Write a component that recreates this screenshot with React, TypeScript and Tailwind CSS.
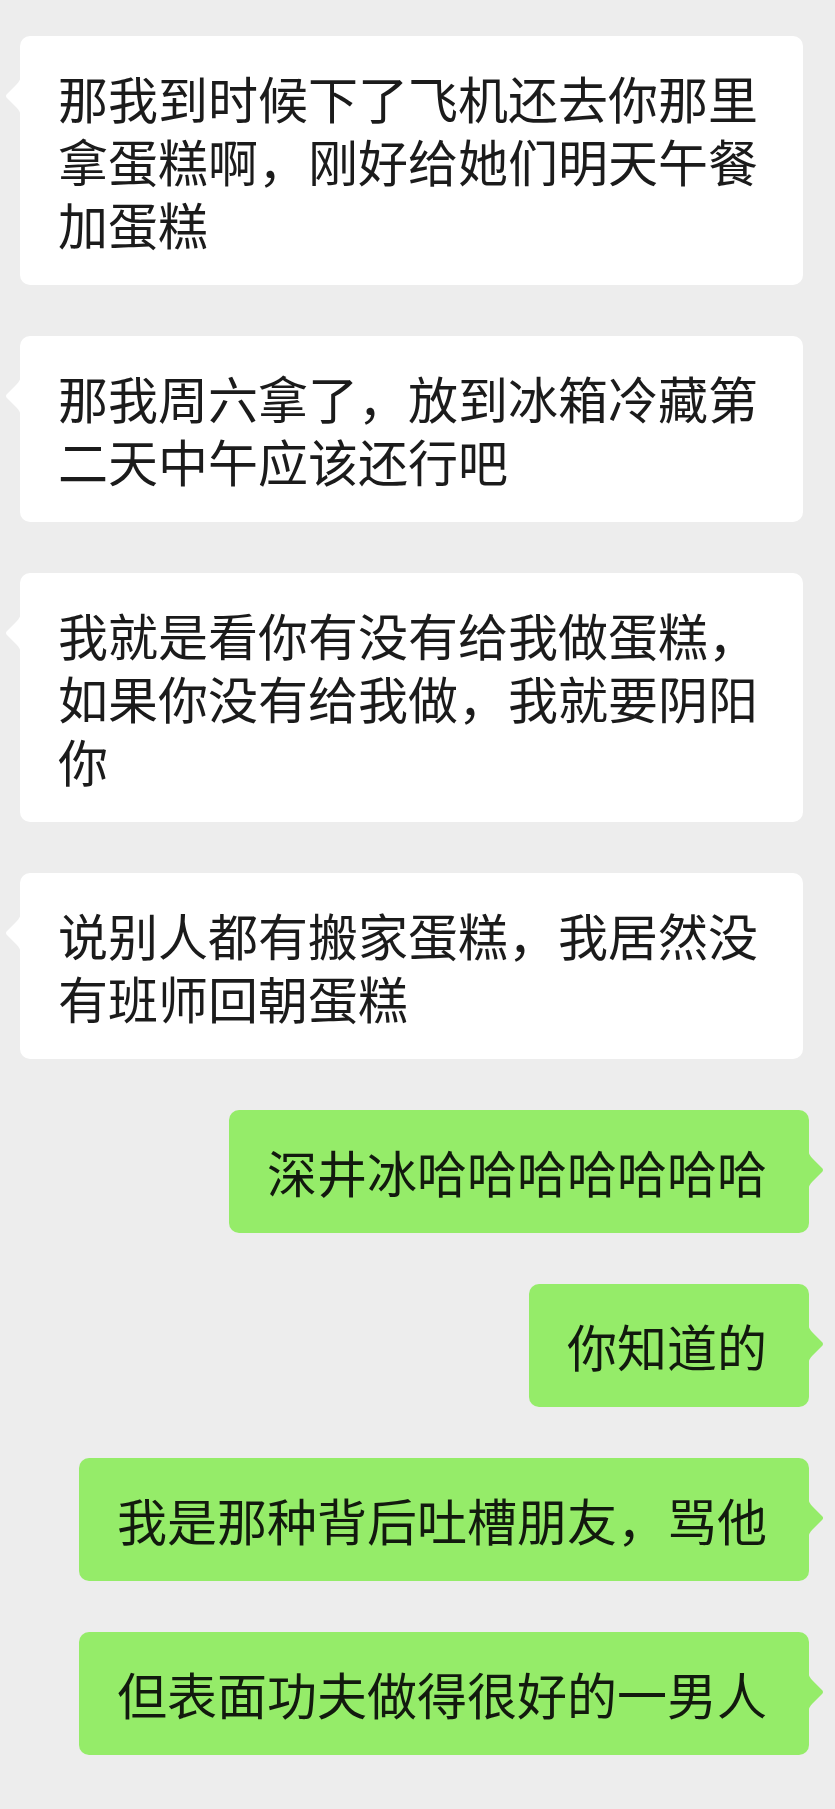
import { type ReactNode } from "react";

type Message = {
	from: "them" | "me";
	text: string;
};

const messages: Message[] = [
	{ from: "them", text: "那我到时候下了飞机还去你那里拿蛋糕啊，刚好给她们明天午餐加蛋糕" },
	{ from: "them", text: "那我周六拿了，放到冰箱冷藏第二天中午应该还行吧" },
	{ from: "them", text: "我就是看你有没有给我做蛋糕，如果你没有给我做，我就要阴阳你" },
	{ from: "them", text: "说别人都有搬家蛋糕，我居然没有班师回朝蛋糕" },
	{ from: "me", text: "深井冰哈哈哈哈哈哈哈" },
	{ from: "me", text: "你知道的" },
	{ from: "me", text: "我是那种背后吐槽朋友，骂他" },
	{ from: "me", text: "但表面功夫做得很好的一男人" },
];

export default function App() {
	return (
		<main
			className="min-h-[1809px] w-[835px] bg-[#ededed] pt-[36px] pb-[54px]"
			style={{ fontFamily: '"Noto Sans CJK SC", "Noto Sans", sans-serif' }}
		>
			<div className="flex flex-col gap-[51px]">
				{messages.map((message, index) =>
					message.from === "them" ? (
						<TheirBubble key={index}>{message.text}</TheirBubble>
					) : (
						<MyBubble key={index}>{message.text}</MyBubble>
					),
				)}
			</div>
		</main>
	);
}

function TheirBubble({ children }: { children: ReactNode }) {
	return (
		<div className="pl-[20px]">
			<div className="relative w-[783px] rounded-[10px] bg-white py-[30px] pl-[38px] pr-[40px] text-[50px] leading-[63px] text-[#1b1b1b]">
				<Tail className="absolute left-[-15px] top-[38px] -scale-x-100" fill="#ffffff" />
				{children}
			</div>
		</div>
	);
}

function MyBubble({ children }: { children: ReactNode }) {
	return (
		<div className="flex justify-end pr-[26px]">
			<div className="relative rounded-[10px] bg-[#95ec69] py-[30px] pl-[38px] pr-[42px] text-[50px] leading-[63px] whitespace-nowrap text-[#121a0e]">
				<Tail className="absolute right-[-15px] top-[38px]" fill="#95ec69" />
				{children}
			</div>
		</div>
	);
}

// tail points right; mirrored for incoming bubbles
function Tail({ className, fill }: { className: string; fill: string }) {
	return (
		<svg
			className={className}
			width="16"
			height="44"
			viewBox="0 0 16 44"
		>
			<path
				d="M0 0 C0 5 2 8 5 11 L14.5 20.5 Q15.6 22 14.5 23.5 L5 33 C2 36 0 39 0 44 Z"
				fill={fill}
			/>
		</svg>
	);
}
